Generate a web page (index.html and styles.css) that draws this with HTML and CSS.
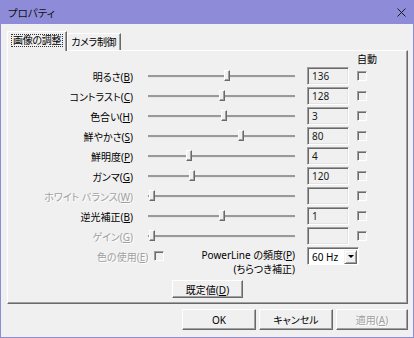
FILE: index.html
```html
<!DOCTYPE html>
<html lang="ja">
<head>
    <meta charset="UTF-8">
    <meta name="viewport" content="width=device-width, initial-scale=1.0">
    <link rel="stylesheet" href="styles.css">
    <title>プロパティ</title>
</head>
<body>
    <div class="window">
        <div class="titlebar">
            <span class="title">プロパティ</span>
            <svg class="close" width="9" height="9" viewBox="0 0 9 9">
                <path d="M0.5 0.5 L8.5 8.5 M8.5 0.5 L0.5 8.5" stroke="#1a1a1a" stroke-width="1" fill="none"/>
            </svg>
        </div>

        <div class="content">
            <div class="tabs">
                <div class="tab active"><span class="focus">画像の調整</span></div>
                <div class="tab">カメラ制御</div>
            </div>

            <div class="panel">
                <div class="grid">
                    <div class="auto-head">自動</div>

                    <div class="label">明るさ(<u>B</u>)</div>
                    <div class="slider"><div class="track"></div><div class="thumb" style="left: 54%;"></div></div>
                    <div class="textbox">136</div>
                    <div class="check"></div>

                    <div class="label">コントラスト(<u>C</u>)</div>
                    <div class="slider"><div class="track"></div><div class="thumb" style="left: 50%;"></div></div>
                    <div class="textbox">128</div>
                    <div class="check"></div>

                    <div class="label">色合い(<u>H</u>)</div>
                    <div class="slider"><div class="track"></div><div class="thumb" style="left: 52%;"></div></div>
                    <div class="textbox">3</div>
                    <div class="check"></div>

                    <div class="label">鮮やかさ(<u>S</u>)</div>
                    <div class="slider"><div class="track"></div><div class="thumb" style="left: 63%;"></div></div>
                    <div class="textbox">80</div>
                    <div class="check"></div>

                    <div class="label">鮮明度(<u>P</u>)</div>
                    <div class="slider"><div class="track"></div><div class="thumb" style="left: 28%;"></div></div>
                    <div class="textbox">4</div>
                    <div class="check"></div>

                    <div class="label">ガンマ(<u>G</u>)</div>
                    <div class="slider"><div class="track"></div><div class="thumb" style="left: 30%;"></div></div>
                    <div class="textbox">120</div>
                    <div class="check"></div>

                    <div class="label disabled">ホワイト バランス(<u>W</u>)</div>
                    <div class="slider"><div class="track"></div><div class="thumb" style="left: 3%;"></div></div>
                    <div class="textbox"></div>
                    <div class="check"></div>

                    <div class="label">逆光補正(<u>B</u>)</div>
                    <div class="slider"><div class="track"></div><div class="thumb" style="left: 50%;"></div></div>
                    <div class="textbox">1</div>
                    <div class="check"></div>

                    <div class="label disabled">ゲイン(<u>G</u>)</div>
                    <div class="slider"><div class="track"></div><div class="thumb" style="left: 3%;"></div></div>
                    <div class="textbox"></div>
                    <div class="check"></div>

                    <!-- 下段: 色の使用 / 電源周波数 -->
                    <div class="extra-row">
                        <div class="color-use">
                            <span class="disabled">色の使用(<u>E</u>)</span>
                            <div class="check"></div>
                        </div>
                        <div class="powerline">PowerLine の頻度(<u>P</u>)<br>(ちらつき補正)</div>
                    </div>
                    <div class="select">
                        <span class="select-value">60 Hz</span>
                        <span class="select-button"><span class="arrow"></span></span>
                    </div>
                </div>

                <div class="defaults-row">
                    <button class="btn defaults">既定値(<u>D</u>)</button>
                </div>
            </div>

            <div class="actions">
                <button class="btn">OK</button>
                <button class="btn">キャンセル</button>
                <button class="btn apply disabled">適用(<u>A</u>)</button>
            </div>
        </div>
    </div>
</body>
</html>
```

FILE: styles.css
```css
body {
    margin: 0;
    background: #f0f0f0;
    font-family: "Noto Sans", "Noto Sans CJK JP", sans-serif;
    font-size: 10px;
    font-feature-settings: "palt";
    color: #000;
}

.window {
    width: 414px;
    height: 338px;
    box-sizing: border-box;
    border: 1px solid #8e8cd8;
    border-top: 0;
    background: #f0f0f0;
    display: flex;
    flex-direction: column;
}

/* タイトルバー */
.titlebar {
    height: 24px;
    margin: 0 -1px;
    padding: 0 8px;
    background: #8e8cd8;
    display: flex;
    align-items: center;
    justify-content: space-between;
}

.title {
    font-size: 10.5px;
    color: #111;
}

.close {
    display: block;
}

.content {
    padding: 7px 5px 0 6px;
}

/* タブ */
.tabs {
    display: flex;
    align-items: flex-end;
    height: 20px;
    margin-bottom: -1px;
    position: relative;
    z-index: 1;
}

.tab {
    box-sizing: border-box;
    height: 17px;
    margin-bottom: 1px;
    padding: 0 4px 0 3px;
    border-top: 1px solid #fff;
    border-left: 1px solid #fff;
    border-right: 1px solid #696969;
    box-shadow: inset -1px 0 #a0a0a0;
    background: #f0f0f0;
    display: flex;
    align-items: center;
    line-height: 12px;
    letter-spacing: -0.3px;
}

.tab.active {
    height: 20px;
    margin-bottom: 0;
    padding: 0 3px 2px 3px;
}

.focus {
    border: 1px dotted #333;
    padding: 0 1px;
    line-height: 11px;
}

/* タブの中身 */
.panel {
    box-sizing: border-box;
    height: 254px;
    border: 1px solid;
    border-color: #fff #696969 #696969 #fff;
    box-shadow: inset -1px -1px #a0a0a0;
}

.grid {
    display: grid;
    grid-template-columns: 140px 159px 50px 10px;
    grid-template-rows: 14px repeat(9, 18px) 29px;
    row-gap: 2px;
    align-items: center;
}

.auto-head {
    grid-column: 4;
    white-space: nowrap;
    align-self: end;
    line-height: 12px;
}

.label {
    grid-column: 1;
    text-align: right;
    padding-right: 15px;
    white-space: nowrap;
}

.disabled,
.btn.disabled {
    color: #a0a0a0;
    text-shadow: 1px 1px #fff;
}

.slider {
    grid-column: 2;
    width: 147px;
    height: 18px;
    position: relative;
    display: flex;
    align-items: center;
}

.track {
    width: 100%;
    height: 2px;
    background: #9a9a9a;
    border-bottom: 1px solid #e6e6e6;
}

.thumb {
    position: absolute;
    top: 3px;
    width: 6px;
    height: 11px;
    margin-left: -3px;
    box-sizing: border-box;
    background: #f0f0f0;
    border: 1px solid;
    border-color: #fff #696969 #696969 #fff;
    box-shadow: inset -1px -1px #a0a0a0;
}

.textbox {
    grid-column: 3;
    width: 42px;
    height: 18px;
    box-sizing: border-box;
    border: 1px solid;
    border-color: #a0a0a0 #fff #fff #a0a0a0;
    box-shadow: inset 1px 1px #696969, inset -1px -1px #e3e3e3;
    padding-left: 4px;
    line-height: 16px;
    color: #1a1a1a;
}

.check {
    width: 10px;
    height: 10px;
    box-sizing: border-box;
    border: 1px solid;
    border-color: #a0a0a0 #fff #fff #a0a0a0;
    box-shadow: inset 1px 1px #696969;
    background: #f0f0f0;
}

.extra-row {
    grid-column: 1 / 3;
    align-self: start;
    display: flex;
    justify-content: space-between;
    padding: 1px 12px 0 89px;
}

.color-use {
    display: flex;
    align-items: center;
    gap: 6px;
    height: 16px;
}

.powerline {
    text-align: right;
    line-height: 14px;
}

.select {
    grid-column: 3 / 5;
    align-self: start;
    width: 52px;
    height: 18px;
    box-sizing: border-box;
    border: 1px solid;
    border-color: #a0a0a0 #fff #fff #a0a0a0;
    box-shadow: inset 1px 1px #696969;
    background: #fff;
    display: flex;
    align-items: center;
    justify-content: space-between;
    padding: 2px 1px 1px 4px;
}

.select-button {
    width: 13px;
    height: 14px;
    box-sizing: border-box;
    background: #f0f0f0;
    border: 1px solid;
    border-color: #f0f0f0 #696969 #696969 #f0f0f0;
    box-shadow: inset 1px 1px #fff, inset -1px -1px #a0a0a0;
    display: flex;
    align-items: center;
    justify-content: center;
}

.arrow {
    width: 0;
    height: 0;
    border-left: 3px solid transparent;
    border-right: 3px solid transparent;
    border-top: 3px solid #000;
}

/* ボタン */
.btn {
    font: inherit;
    color: #000;
    background: #f0f0f0;
    box-sizing: border-box;
    border: 1px solid;
    border-color: #fff #696969 #696969 #fff;
    box-shadow: inset -1px -1px #a0a0a0;
    padding: 0;
    width: 74px;
    height: 21px;
}

.defaults-row {
    display: flex;
    justify-content: center;
    margin-top: 4px;
}

.btn.defaults {
    width: 71px;
    height: 18px;
}

.actions {
    display: flex;
    justify-content: flex-end;
    gap: 3px;
    margin-top: 5px;
}

.btn.apply {
    width: 72px;
}
```
